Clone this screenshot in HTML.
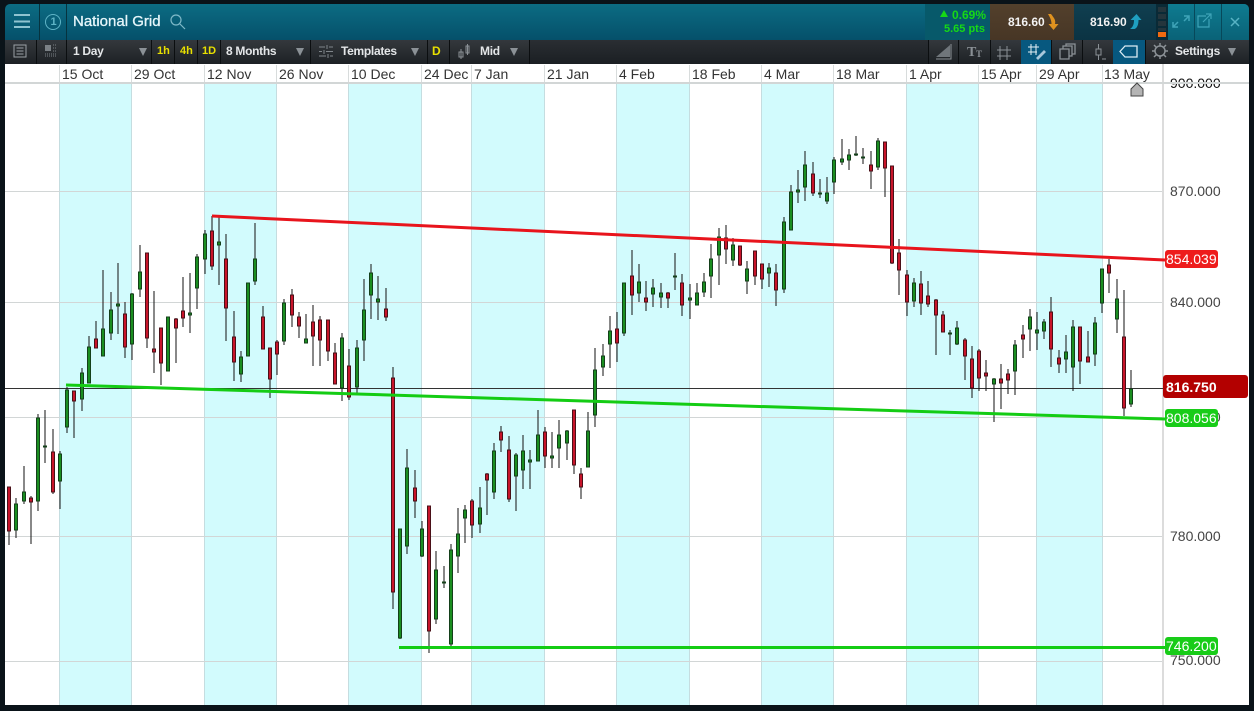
<!DOCTYPE html>
<html><head><meta charset="utf-8">
<style>
html,body{margin:0;padding:0;width:1254px;height:711px;overflow:hidden;background:#0a1319;font-family:"Liberation Sans",sans-serif}
div{position:absolute;box-sizing:border-box}
.tb{top:40px;height:24px;background:linear-gradient(#34383d,#1d2125);}
.s{top:40px;width:1px;height:24px;background:#0b0e10}
.t{top:41px;height:20px;line-height:20px;font-size:12px;font-weight:bold;color:#e4e6e8;white-space:nowrap;letter-spacing:-.3px}
.y{color:#e8e000;font-size:11px;letter-spacing:0}
.d{top:66px;height:16px;line-height:16px;font-size:14px;color:#333;white-space:nowrap}
.ax{left:1170px;height:16px;line-height:16px;font-size:14px;color:#444;white-space:nowrap}
.lb{left:1165px;width:53px;height:18px;line-height:18px;border-radius:3px;color:#fff;font-size:14px;padding-left:1px;white-space:nowrap}
.tri{top:48px;width:0;height:0;border-left:4.5px solid transparent;border-right:4.5px solid transparent;border-top:8px solid #8b9196}
.band{top:84px;height:621px;background:#d2fbfd;border-left:1px solid #c5dde0;border-right:1px solid #c5dde0}
.v{top:65px;width:1px;height:18px;background:#d8dcdc}
.h{left:5px;width:1158px;height:1px;background:#d2d6d6}
svg{position:absolute;left:0;top:0}
</style></head><body>
<div style="left:5px;top:4px;width:1244px;height:36px;background:linear-gradient(#0c6c83,#05506a);border-radius:5px 5px 0 0"></div>
<div style="left:5px;top:64px;width:1244px;height:641px;background:#fff"></div>

<div class="tb" style="left:5px;width:1244px"></div>
<div style="left:529px;top:40px;width:399px;height:24px;background:linear-gradient(#2a2e33,#1b1f23)"></div>

<div style="left:925px;top:4px;width:65px;height:36px;background:#07596a"></div>
<div style="left:990px;top:4px;width:84px;height:36px;background:linear-gradient(#53402c,#473625)"></div>
<div style="left:1074px;top:4px;width:82px;height:36px;background:linear-gradient(#103f50,#0b3343)"></div>
<div style="left:1156px;top:4px;width:12px;height:36px;background:#0a2a36"></div>
<div style="left:1168px;top:4px;width:81px;height:36px;background:linear-gradient(#0e7b90,#0a6277);border-radius:0 5px 0 0"></div>
<div style="left:1158px;top:7px;width:8px;height:5px;background:#24353c"></div>
<div style="left:1158px;top:14px;width:8px;height:5px;background:#24353c"></div>
<div style="left:1158px;top:21px;width:8px;height:5px;background:#24353c"></div>
<div style="left:1158px;top:28px;width:8px;height:3px;background:#24353c"></div>
<div style="left:1158px;top:32px;width:8px;height:5px;background:#f06a10"></div>
<div style="left:39px;top:4px;width:1px;height:36px;background:#06333f"></div>
<div style="left:66px;top:4px;width:1px;height:36px;background:#06333f"></div>
<div style="left:1194px;top:4px;width:1px;height:36px;background:#07485a"></div>
<div style="left:1221px;top:4px;width:1px;height:36px;background:#07485a"></div>

<div style="left:73px;top:12px;height:20px;line-height:20px;font-size:15px;color:#e6f6fa;-webkit-text-stroke:.3px #e6f6fa;white-space:nowrap">National Grid</div>
<div style="left:48px;top:15px;width:11px;text-align:center;height:14px;line-height:14px;font-size:11px;font-weight:bold;color:#5fb4c6">1</div>
<div style="left:952px;top:8px;height:14px;line-height:14px;font-size:12px;font-weight:bold;color:#16d916;white-space:nowrap">0.69%</div>
<div style="left:944px;top:22px;height:14px;line-height:14px;font-size:11px;font-weight:bold;color:#16d916;white-space:nowrap">5.65 pts</div>
<div style="left:1008px;top:15px;height:14px;line-height:14px;font-size:12px;font-weight:bold;color:#f2f2f2;white-space:nowrap">816.60</div>
<div style="left:1090px;top:15px;height:14px;line-height:14px;font-size:12px;font-weight:bold;color:#f2f2f2;white-space:nowrap">816.90</div>

<div class="s" style="left:36px"></div><div class="s" style="left:66px"></div><div class="s" style="left:151px"></div>
<div class="s" style="left:174px"></div><div class="s" style="left:197px"></div><div class="s" style="left:220px"></div>
<div class="s" style="left:310px"></div><div class="s" style="left:427px"></div><div class="s" style="left:449px"></div>
<div class="s" style="left:529px"></div><div class="s" style="left:928px"></div><div class="s" style="left:958px"></div>
<div class="s" style="left:990px"></div><div class="s" style="left:1082px"></div><div class="s" style="left:1113px"></div><div class="s" style="left:1145px"></div>
<div style="left:1021px;top:40px;width:30px;height:24px;background:#07587f"></div>
<div style="left:1113px;top:40px;width:32px;height:24px;background:#07587f"></div>
<div class="s" style="left:1051px"></div>

<div class="t" style="left:73px">1 Day</div>
<div class="tri" style="left:139px"></div>
<div class="t y" style="left:157px">1h</div>
<div class="t y" style="left:180px">4h</div>
<div class="t y" style="left:202px">1D</div>
<div class="t" style="left:226px">8 Months</div>
<div class="tri" style="left:296px"></div>
<div class="t" style="left:341px">Templates</div>
<div class="tri" style="left:411px"></div>
<div class="t y" style="left:432px;font-size:12px">D</div>
<div class="t" style="left:480px">Mid</div>
<div class="tri" style="left:510px"></div>
<div class="t" style="left:1175px">Settings</div>
<div class="tri" style="left:1228px"></div>
<div style="left:967px;top:42px;height:20px;line-height:21px;font:bold 14px/21px 'Liberation Serif',serif;color:#8a9095">T</div>
<div style="left:976px;top:45px;height:16px;font:bold 9px/18px 'Liberation Serif',serif;color:#8a9095">T</div>

<div class="band" style="left:59px;width:73px"></div>
<div class="band" style="left:204px;width:73px"></div>
<div class="band" style="left:348px;width:74px"></div>
<div class="band" style="left:471px;width:74px"></div>
<div class="band" style="left:616px;width:74px"></div>
<div class="band" style="left:761px;width:73px"></div>
<div class="band" style="left:906px;width:73px"></div>
<div class="band" style="left:1036px;width:67px"></div>

<div class="h" style="top:191px"></div>
<div class="h" style="top:302px"></div>
<div class="h" style="top:417px"></div>
<div class="h" style="top:536px"></div>
<div class="h" style="top:661px"></div>
<div style="left:1162px;top:64px;width:2px;height:641px;background:#dcdcdc"></div>

<div class="v" style="left:59px"></div><div class="v" style="left:131px"></div><div class="v" style="left:204px"></div><div class="v" style="left:276px"></div><div class="v" style="left:348px"></div><div class="v" style="left:421px"></div><div class="v" style="left:471px"></div><div class="v" style="left:544px"></div><div class="v" style="left:616px"></div><div class="v" style="left:689px"></div><div class="v" style="left:761px"></div><div class="v" style="left:833px"></div><div class="v" style="left:906px"></div><div class="v" style="left:978px"></div><div class="v" style="left:1036px"></div><div class="v" style="left:1102px"></div>

<div class="d" style="left:62px">15 Oct</div>
<div class="d" style="left:134px">29 Oct</div>
<div class="d" style="left:207px">12 Nov</div>
<div class="d" style="left:279px">26 Nov</div>
<div class="d" style="left:351px">10 Dec</div>
<div class="d" style="left:424px">24 Dec</div>
<div class="d" style="left:474px">7 Jan</div>
<div class="d" style="left:547px">21 Jan</div>
<div class="d" style="left:619px">4 Feb</div>
<div class="d" style="left:692px">18 Feb</div>
<div class="d" style="left:764px">4 Mar</div>
<div class="d" style="left:836px">18 Mar</div>
<div class="d" style="left:909px">1 Apr</div>
<div class="d" style="left:981px">15 Apr</div>
<div class="d" style="left:1039px">29 Apr</div>
<div class="d" style="left:1104px">13 May</div>

<div class="ax" style="top:75px;color:#111">900.000</div>
<div class="ax" style="top:183px">870.000</div>
<div class="ax" style="top:294px">840.000</div>
<div class="ax" style="top:409px">810.000</div>
<div class="ax" style="top:528px">780.000</div>
<div class="ax" style="top:652px">750.000</div>
<div class="h" style="top:82px;height:2px;width:1244px"></div>

<svg width="1254" height="711" viewBox="0 0 1254 711">
<g fill="none">
<path d="M14 15h16M14 21.500h16M14 27h16" stroke="#8fc3d0" stroke-width="2"/>
<circle cx="53" cy="22" r="7.500" stroke="#5fb4c6" stroke-width="1"/>
<circle cx="176" cy="20" r="5" stroke="#7fb9c8" stroke-width="1.200"/><path d="M180 24l5 5" stroke="#7fb9c8" stroke-width="1.200"/>
<path d="M1178 27l-5 0 0 -5M1173 27l5-5M1184 16l5 0 0 5M1189 16l-5 5" stroke="#3fa4b8" stroke-width="1.500"/>
<path d="M1209 19v8h-11v-11h8M1203 22l8-8M1206 14h5v5" stroke="#3fa4b8" stroke-width="1.200"/>
<path d="M1231 18l8 8M1239 18l-8 8" stroke="#58b3c4" stroke-width="1.500"/>
<path d="M14 45h12v12h-12zM16.500 48h7M16.500 51h7M16.500 54h7" stroke="#9ba1a6" stroke-width="1"/>
<path d="M45 45h6v6h-6z" fill="#7b8186"/><path d="M53 45h3M53 48h3M53 51h3M45 54h11M45 56h11" stroke="#7b8186" stroke-width="1" stroke-dasharray="1 1"/>
<path d="M319 47h6M329 47h4M319 51.500h3M326 51.500h7M319 56h7M330 56h3M327 45v4M324 50v4M328 54v4" stroke="#80868b" stroke-width="1"/>
<path d="M459 52h4v5h-4zM461 49v10M466 46h3v7h-3zM467.500 44v11M471 48h0" stroke="#8b9196" stroke-width="1"/>
<path d="M936 57h14V45z" fill="#70767b"/><path d="M936 59h15V44" stroke="#8b9196" stroke-width="1"/>
<path d="M1000 46v14M1007 46v14M997 50h14M997 56h14" stroke="#8b9196" stroke-width="1"/>
<path d="M1031 44v11M1036 44v11M1028 47h11M1028 52h9" stroke="#e4f0f6" stroke-width="1"/><path d="M1036 58l8-8 2 2-8 8z" fill="#a8c8dc"/>
<path d="M1060 49h9v10h-9zM1063 49v-3h9v10h-3M1066 46v-2h9v10h-3" stroke="#8b9196" stroke-width="1.300"/>
<path d="M1096 49h5v6h-5zM1098.500 44v5M1098.500 55v5M1102 59h4" stroke="#8b9196" stroke-width="1"/>
<path d="M1137 46h-12l-5 5.500 5 5.500h12z" stroke="#dcecf4" stroke-width="1.300"/>
<circle cx="1160" cy="51" r="5" stroke="#8b9196" stroke-width="1.500"/><path d="M1160 43v3M1160 56v3M1152 51h3M1165 51h3M1154 45l2 2M1164 55l2 2M1166 45l-2 2M1156 55l-2 2" stroke="#8b9196" stroke-width="1.500"/>
</g>
<path d="M944 10l4 7h-8z" fill="#16d916"/>
<path d="M1048 14h3c3 4 5 6 4 10h3.500l-5 6-5-6h3c0-3-1-6-3.500-10z" fill="#e0921f"/>
<path d="M1130 29c3-2 4-5 4-9h-3.500l6-6 5 6h-3c0 4-1 8-4 9z" fill="#1f9fc0"/>

<path d="M5 388.500H1163" stroke="#333" stroke-width="1" shape-rendering="crispEdges"/>

<path fill="none" stroke="#111" stroke-width="1" shape-rendering="crispEdges" d="M9 531V545M16 498V538M24 466V504M31 496V544M38 414V511M45 410V463M53 429V494M60 451V509M67 387V433M74 391V438M82 368V411M89 336V383M96 321V348M103 270V356M111 292V340M118 263V334M125 302V358M132 293V360M140 245V297M147 253V348M154 291V373M161 328V385M168 317V371M176 318V363M183 277V327M190 273V333M197 254V309M205 230V274M212 216V270M219 215V285M226 234V341M234 311V381M241 351V382M248 283V356M255 223V285M263 306V349M270 348V398M277 340V375M284 299V345M292 289V327M299 312V338M306 314V343M313 305V366M320 316V366M328 320V361M335 343V384M342 333V401M349 349V400M357 340V393M364 279V361M371 264V319M378 276V320M386 288V321M393 367V609M400 529V639M407 449V554M415 470V518M422 521V557M429 506V653M436 551V624M444 566V588M451 544V646M458 508V573M465 505V543M472 499V538M480 487V533M487 473V515M494 443V499M501 426V452M509 436V502M516 453V511M523 435V489M530 450V489M538 410V461M545 427V468M552 432V468M559 420V468M567 430V460M574 410V474M581 468V499M588 412V467M595 348V427M603 344V376M610 316V368M617 312V362M624 283V336M632 250V315M639 264V302M646 281V311M653 279V307M661 283V308M668 292V308M675 253V290M682 274V316M690 284V319M697 283V305M704 273V297M711 244V298M719 228V285M726 225V264M733 238V266M740 246V266M747 261V294M755 251V285M762 264V289M769 263V287M776 264V306M784 217V293M791 185V230M798 170V203M805 151V201M813 162V196M820 179V198M827 177V204M834 157V194M842 139V165M849 149V170M856 136V156M863 148V164M871 151V189M878 138V170M885 142V197M892 166V264M899 239V295M907 270V316M914 278V307M921 271V315M928 281V307M936 299V355M943 311V332M950 330V355M957 321V345M965 338V380M972 346V398M979 349V391M986 360V391M994 378V422M1001 364V409M1008 369V394M1015 340V395M1023 325V358M1030 309V351M1037 312V350M1044 319V339M1051 297V367M1059 350V373M1066 335V373M1073 320V391M1080 327V384M1088 331V362M1095 317V366M1102 269V313M1109 259V293M1117 279V333M1124 290V416M1131 370V407"/>

<path fill="#1a8e20" stroke="#14401a" stroke-width="1" shape-rendering="crispEdges" d="M14.500 504h3V530h-3zM22.500 492h3V501h-3zM36.500 418h3V501h-3zM43.500 446h3V447h-3zM58.500 454h3V481h-3zM65.500 390h3V427h-3zM80.500 373h3V399h-3zM87.500 347h3V383h-3zM101.500 329h3V356h-3zM109.500 310h3V333h-3zM116.500 304h3V306h-3zM130.500 294h3V344h-3zM138.500 272h3V289h-3zM166.500 317h3V371h-3zM188.500 313h3V315h-3zM195.500 257h3V288h-3zM203.500 234h3V259h-3zM217.500 242h3V245h-3zM239.500 357h3V374h-3zM246.500 283h3V356h-3zM253.500 259h3V281h-3zM282.500 303h3V341h-3zM304.500 339h3V343h-3zM340.500 338h3V388h-3zM355.500 348h3V387h-3zM362.500 310h3V340h-3zM369.500 273h3V295h-3zM376.500 299h3V302h-3zM398.500 529h3V638h-3zM405.500 468h3V546h-3zM420.500 529h3V556h-3zM434.500 570h3V619h-3zM442.500 582h3V583h-3zM449.500 550h3V644h-3zM456.500 534h3V556h-3zM463.500 510h3V518h-3zM478.500 508h3V524h-3zM492.500 451h3V492h-3zM514.500 455h3V476h-3zM521.500 451h3V470h-3zM528.500 460h3V462h-3zM536.500 435h3V461h-3zM550.500 456h3V458h-3zM557.500 435h3V448h-3zM565.500 431h3V443h-3zM586.500 431h3V467h-3zM593.500 370h3V415h-3zM601.500 356h3V367h-3zM608.500 331h3V344h-3zM622.500 283h3V333h-3zM637.500 282h3V293h-3zM651.500 288h3V294h-3zM659.500 293h3V297h-3zM673.500 276h3V277h-3zM688.500 298h3V300h-3zM695.500 293h3V305h-3zM702.500 282h3V292h-3zM709.500 259h3V276h-3zM717.500 237h3V255h-3zM731.500 245h3V260h-3zM745.500 269h3V281h-3zM767.500 268h3V273h-3zM782.500 222h3V289h-3zM789.500 192h3V230h-3zM796.500 190h3V192h-3zM803.500 165h3V187h-3zM818.500 193h3V194h-3zM825.500 193h3V201h-3zM832.500 160h3V182h-3zM840.500 159h3V162h-3zM847.500 155h3V160h-3zM854.500 154h3V155h-3zM861.500 157h3V158h-3zM876.500 141h3V167h-3zM912.500 283h3V301h-3zM948.500 333h3V334h-3zM955.500 328h3V344h-3zM992.500 379h3V384h-3zM1013.500 345h3V371h-3zM1028.500 317h3V329h-3zM1035.500 330h3V333h-3zM1042.500 322h3V331h-3zM1064.500 352h3V359h-3zM1071.500 327h3V367h-3zM1093.500 323h3V354h-3zM1100.500 269h3V303h-3zM1115.500 299h3V319h-3zM1129.500 389h3V404h-3z"/>

<path fill="#c8142a" stroke="#4a1018" stroke-width="1" shape-rendering="crispEdges" d="M7.500 487h3V531h-3zM29.500 498h3V502h-3zM51.500 452h3V492h-3zM72.500 391h3V401h-3zM94.500 339h3V348h-3zM123.500 314h3V347h-3zM145.500 253h3V338h-3zM152.500 349h3V352h-3zM159.500 328h3V363h-3zM174.500 319h3V328h-3zM181.500 311h3V318h-3zM210.500 231h3V266h-3zM224.500 259h3V308h-3zM232.500 337h3V362h-3zM261.500 317h3V349h-3zM268.500 348h3V379h-3zM275.500 342h3V354h-3zM290.500 295h3V315h-3zM297.500 317h3V326h-3zM311.500 322h3V336h-3zM318.500 320h3V340h-3zM326.500 320h3V351h-3zM333.500 353h3V384h-3zM347.500 366h3V397h-3zM384.500 309h3V317h-3zM391.500 378h3V592h-3zM413.500 488h3V501h-3zM427.500 506h3V631h-3zM470.500 501h3V525h-3zM485.500 474h3V480h-3zM499.500 432h3V440h-3zM507.500 450h3V499h-3zM543.500 432h3V456h-3zM572.500 410h3V465h-3zM579.500 474h3V487h-3zM615.500 329h3V343h-3zM630.500 276h3V295h-3zM644.500 298h3V302h-3zM666.500 293h3V298h-3zM680.500 283h3V305h-3zM724.500 238h3V249h-3zM738.500 246h3V265h-3zM753.500 251h3V276h-3zM760.500 264h3V279h-3zM774.500 273h3V290h-3zM811.500 174h3V193h-3zM869.500 165h3V171h-3zM883.500 142h3V168h-3zM890.500 166h3V263h-3zM897.500 253h3V270h-3zM905.500 275h3V302h-3zM919.500 284h3V303h-3zM926.500 296h3V304h-3zM934.500 300h3V315h-3zM941.500 315h3V332h-3zM963.500 340h3V356h-3zM970.500 359h3V388h-3zM977.500 351h3V378h-3zM984.500 373h3V376h-3zM999.500 379h3V383h-3zM1006.500 374h3V380h-3zM1021.500 335h3V339h-3zM1049.500 312h3V349h-3zM1057.500 358h3V364h-3zM1078.500 327h3V361h-3zM1086.500 357h3V362h-3zM1107.500 265h3V273h-3zM1122.500 337h3V408h-3z"/>

<path d="M212 216L1165 260" stroke="#e8141c" stroke-width="3" fill="none"/>
<path d="M66 385L1165 419" stroke="#14cc14" stroke-width="3" fill="none"/>
<path d="M399 647.500H1165" stroke="#14cc14" stroke-width="3" fill="none"/>
<path d="M1131 96V89l6-6 6 6v7z" fill="#b4b4b4" stroke="#444" stroke-width="1"/>
</svg>

<div class="lb" style="top:250px;background:#ee1c1c">854.039</div>
<div class="lb" style="top:409px;background:#18cc18">808.056</div>
<div class="lb" style="top:637px;background:#18cc18">746.200</div>
<div style="left:1163px;top:375px;width:85px;height:23px;line-height:24px;border-radius:3px;background:#b30000;color:#fff;font-size:14px;font-weight:bold;padding-left:3px">816.750</div>
</body></html>
